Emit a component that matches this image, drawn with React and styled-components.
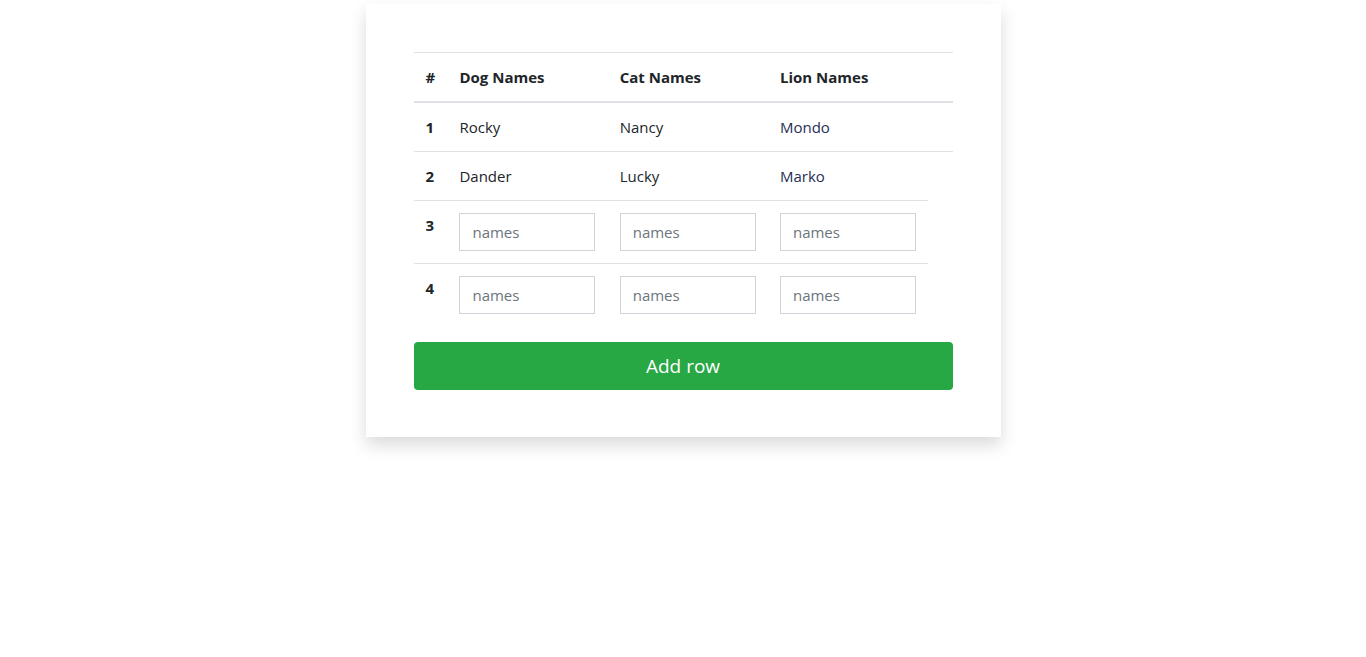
import React, { useState } from "react";
import styled, { createGlobalStyle } from "styled-components";

const GlobalStyle = createGlobalStyle`
  body {
    margin: 0;
    background: #fff;
    font-family: "Open Sans", "Noto Sans", sans-serif;
    font-size: 15px;
    line-height: 24px;
    color: #212529;
  }
`;

const Page = styled.div`
  display: flex;
  justify-content: center;
  padding: 4px 0 24px;
`;

const Card = styled.div`
  width: 635px;
  box-sizing: border-box;
  padding: 48px 48px 47px;
  background: #fff;
  box-shadow: 0 8px 16px rgba(0, 0, 0, 0.15);
`;

const Table = styled.table`
  width: 100%;
  border-collapse: collapse;
  margin-bottom: 16px;
`;

const HeadCell = styled.th`
  text-align: left;
  padding: 12px;
  font-weight: 700;
  border-top: 1px solid #dee2e6;
  border-bottom: 2px solid #dee2e6;
  width: ${(p) => p.width}px;
`;

const Row = styled.tr`
  td,
  th {
    border-top: 1px solid #dee2e6;
  }
`;

const NumCell = styled.th`
  text-align: left;
  vertical-align: top;
  padding: 12px;
  font-weight: 700;
`;

const Cell = styled.td`
  vertical-align: top;
  padding: 12px;
  color: ${(p) => p.color || "#212529"};
`;

const Input = styled.input`
  display: block;
  width: 136px;
  height: 38px;
  box-sizing: border-box;
  padding: 6px 12px;
  border: 1px solid #ced4da;
  border-radius: 0;
  font: inherit;
  color: #495057;
  &::placeholder {
    color: #6c757d;
  }
`;

const AddButton = styled.button`
  display: block;
  width: 100%;
  height: 48px;
  border: none;
  border-radius: 4px;
  background: #28a745;
  color: #fff;
  font-family: inherit;
  font-size: 19px;
  cursor: pointer;
`;

const rows = [
  { dog: "Rocky", cat: "Nancy", lion: "Mondo" },
  { dog: "Dander", cat: "Lucky", lion: "Marko" },
];

export default function App() {
  const [extra, setExtra] = useState(2);

  return (
    <>
      <GlobalStyle />
      <Page>
        <Card>
          <Table>
            <thead>
              <tr>
                <HeadCell width={33}>#</HeadCell>
                <HeadCell width={161}>Dog Names</HeadCell>
                <HeadCell width={160}>Cat Names</HeadCell>
                <HeadCell width={160}>Lion Names</HeadCell>
                <HeadCell width={25}></HeadCell>
              </tr>
            </thead>
            <tbody>
              {rows.map((r, i) => (
                <Row key={i}>
                  <NumCell>{i + 1}</NumCell>
                  <Cell>{r.dog}</Cell>
                  <Cell>{r.cat}</Cell>
                  <Cell color="#1f2f55">{r.lion}</Cell>
                  <Cell></Cell>
                </Row>
              ))}
              {Array.from({ length: extra }).map((_, i) => (
                <Row key={"x" + i}>
                  <NumCell>{rows.length + i + 1}</NumCell>
                  <Cell>
                    <Input placeholder="names" />
                  </Cell>
                  <Cell>
                    <Input placeholder="names" />
                  </Cell>
                  <Cell>
                    <Input placeholder="names" />
                  </Cell>
                </Row>
              ))}
            </tbody>
          </Table>
          <AddButton onClick={() => setExtra(extra + 1)}>Add row</AddButton>
        </Card>
      </Page>
    </>
  );
}
